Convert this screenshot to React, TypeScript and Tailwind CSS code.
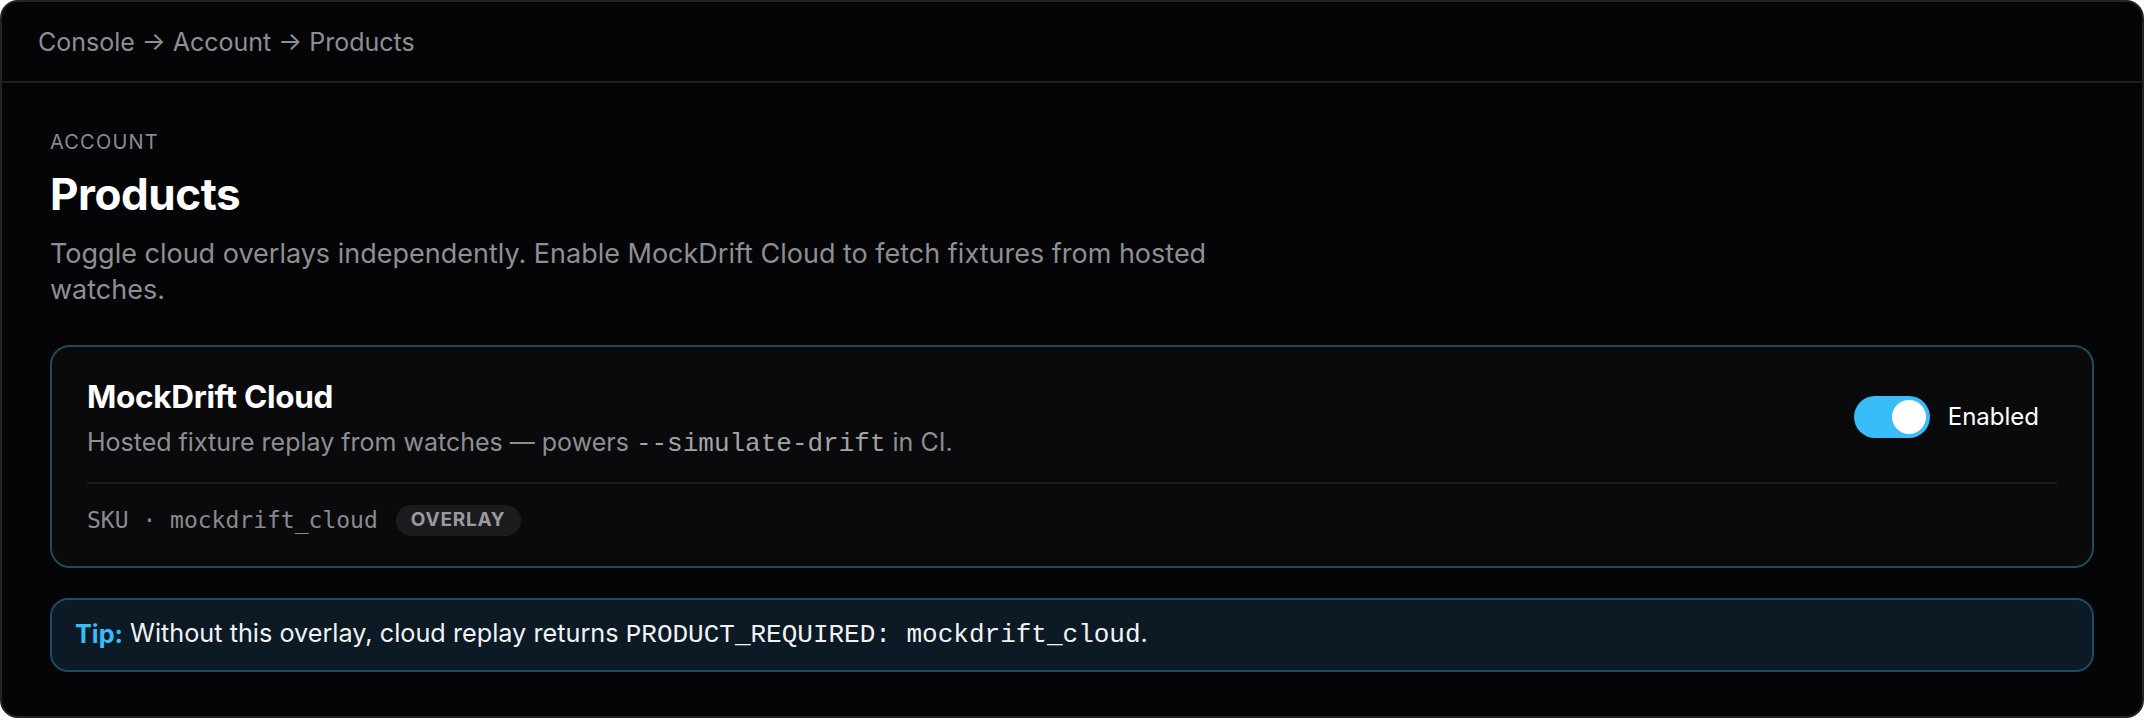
import { useState } from "react";

const sans = "font-['Inter','Noto_Sans',sans-serif]";
const code = "font-['Liberation_Mono','Courier_New',monospace]";
const mono = "font-['DejaVu_Sans_Mono','Liberation_Mono',monospace]";

const Toggle = (props: { on: boolean; onChange: (v: boolean) => void }) => {
  const { on, onChange } = props;
  return (
    <button
      onClick={() => onChange(!on)}
      className={
        on
          ? "w-[76px] h-[42px] rounded-full bg-[#38bdf8] flex items-center justify-end px-[4px]"
          : "w-[76px] h-[42px] rounded-full bg-[#3a3a3f] flex items-center justify-start px-[4px]"
      }
    >
      <span className="w-[34px] h-[34px] rounded-full bg-white block" />
    </button>
  );
};

export default function App() {
  const [enabled, setEnabled] = useState(true);

  return (
    <div className={`${sans} w-[2144px] h-[718px] bg-[#050507] rounded-[18px] border-2 border-[#232326] overflow-hidden`}>
      <div className="h-[81px] border-b-2 border-[#1d1d20] flex items-center pl-[36px] pt-[2px] text-[25px] text-[#8e8e93]">
        Console → Account → Products
      </div>

      <div className="px-[48px] pt-[45px]">
        <div className="text-[20px] leading-[28px] tracking-[0.06em] uppercase text-[#8a8a8f]">Account</div>
        <h1 className="mt-[13px] text-[44px] leading-[50px] font-bold tracking-[-0.01em] text-white">Products</h1>
        <p className="mt-[17px] max-w-[1220px] text-[27px] leading-[36px] text-[#8e8e93]">
          Toggle cloud overlays independently. Enable MockDrift Cloud to fetch fixtures from hosted watches.
        </p>

        <div className="mt-[37px] rounded-[20px] border-2 border-[#1e4a60] bg-[#0a0a0c] px-[35px] pt-[32px] pb-[28px]">
          <div className="flex items-center justify-between">
            <div>
              <div className="text-[31.5px] leading-[36px] font-bold tracking-[-0.01em] text-white">MockDrift Cloud</div>
              <div className="mt-[10px] text-[25px] leading-[34px] text-[#8e8e93]">
                Hosted fixture replay from watches — powers{" "}
                <code className={`${code} text-[26px] text-[#a3a3a8]`}>--simulate-drift</code> in CI.
              </div>
            </div>
            <div className="flex items-center gap-[18px] mr-[18px] mb-[6px]">
              <Toggle on={enabled} onChange={setEnabled} />
              <span className="text-[24px] text-white">{enabled ? "Enabled" : "Disabled"}</span>
            </div>
          </div>

          <div className="mt-[21px] h-[2px] bg-[#1c1c1f]" />

          <div className="mt-[19px] flex items-center gap-[18px]">
            <span className={`${mono} text-[23px] text-[#8a8a8f]`}>SKU · mockdrift_cloud</span>
            <span className="h-[31px] px-[15px] rounded-full bg-[#1c1c1f] flex items-center text-[19px] font-bold tracking-[0.04em] text-[#9a9a9f]">
              OVERLAY
            </span>
          </div>
        </div>

        <div className="mt-[30px] h-[74px] rounded-[18px] border-2 border-[#1d4b63] bg-[#0b1a24] flex items-center px-[23px] text-[25.25px] text-[#f2f2f4]">
          <span className="font-bold text-[#38bdf8]">Tip:</span>
          <span className="ml-[7px]">
            Without this overlay, cloud replay returns{" "}
            <code className={`${code} text-[26px]`}>PRODUCT_REQUIRED: mockdrift_cloud</code>.
          </span>
        </div>
      </div>
    </div>
  );
}
